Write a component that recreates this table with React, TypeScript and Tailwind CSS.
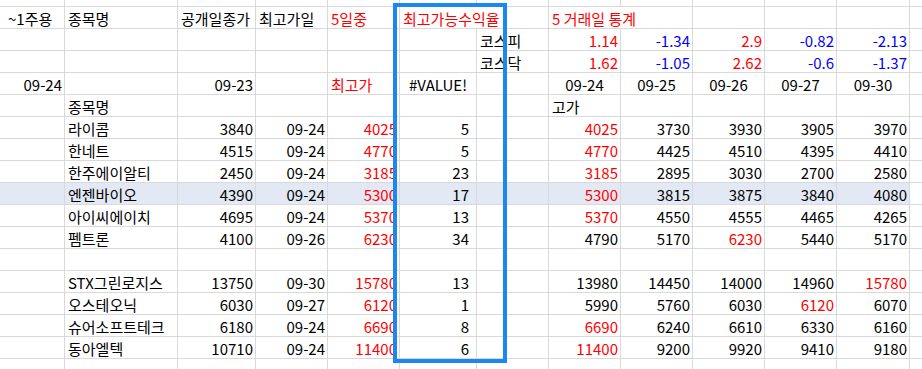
type Tone = 'k' | 'r' | 'b';
type Align = 'l' | 'r' | 'c';

interface CellDef {
  t?: string;
  tone?: Tone;
  align?: Align;
  open?: boolean; // text runs into the next cell, no divider
}

const COLS =
  'grid-cols-[65px_113px_78px_72px_72px_77px_72px_72px_72px_72px_72px_73px_12px]';

const r = (t: string): CellDef => ({ t, tone: 'r', align: 'r' });
const n = (t: string): CellDef => ({ t, align: 'r' });
const b = (t: string): CellDef => ({ t, tone: 'b', align: 'r' });
const c = (t: string): CellDef => ({ t, align: 'c' });
const E: CellDef = {};

const stock = (
  name: string,
  open: string,
  date: string,
  high: string,
  pct: string,
  days: CellDef[],
): CellDef[] => [E, { t: name }, n(open), n(date), r(high), { t: pct, align: 'r' }, E, ...days];

const ROWS: { cells: CellDef[]; hl?: boolean }[] = [
  {
    cells: [
      { t: '~1주용' },
      { t: '종목명' },
      { t: '공개일종가' },
      { t: '최고가일' },
      { t: '5일중', tone: 'r' },
      { t: '최고가능수익율', tone: 'r', open: true },
      E,
      { t: '5 거래일 통계', tone: 'r', open: true },
      E, E, E, E,
    ],
  },
  { cells: [E, E, E, E, E, E, { t: '코스피' }, r('1.14'), b('-1.34'), r('2.9'), b('-0.82'), b('-2.13')] },
  { cells: [E, E, E, E, E, E, { t: '코스닥' }, r('1.62'), b('-1.05'), r('2.62'), b('-0.6'), b('-1.37')] },
  {
    cells: [
      n('09-24'), E, n('09-23'), E,
      { t: '최고가', tone: 'r' },
      c('#VALUE!'),
      E,
      c('09-24'), c('09-25'), c('09-26'), c('09-27'), c('09-30'),
    ],
  },
  { cells: [E, { t: '종목명' }, E, E, E, E, E, { t: '고가' }, E, E, E, E] },
  { cells: stock('라이콤', '3840', '09-24', '4025', '5', [r('4025'), n('3730'), n('3930'), n('3905'), n('3970')]) },
  { cells: stock('한네트', '4515', '09-24', '4770', '5', [r('4770'), n('4425'), n('4510'), n('4395'), n('4410')]) },
  { cells: stock('한주에이알티', '2450', '09-24', '3185', '23', [r('3185'), n('2895'), n('3030'), n('2700'), n('2580')]) },
  { cells: stock('엔젠바이오', '4390', '09-24', '5300', '17', [r('5300'), n('3815'), n('3875'), n('3840'), n('4080')]), hl: true },
  { cells: stock('아이씨에이치', '4695', '09-24', '5370', '13', [r('5370'), n('4550'), n('4555'), n('4465'), n('4265')]) },
  { cells: stock('펨트론', '4100', '09-26', '6230', '34', [n('4790'), n('5170'), r('6230'), n('5440'), n('5170')]) },
  { cells: [E, E, E, E, E, E, E, E, E, E, E, E] },
  { cells: stock('STX그린로지스', '13750', '09-30', '15780', '13', [n('13980'), n('14450'), n('14000'), n('14960'), r('15780')]) },
  { cells: stock('오스테오닉', '6030', '09-27', '6120', '1', [n('5990'), n('5760'), n('6030'), r('6120'), n('6070')]) },
  { cells: stock('슈어소프트테크', '6180', '09-24', '6690', '8', [r('6690'), n('6240'), n('6610'), n('6330'), n('6160')]) },
  { cells: stock('동아엘텍', '10710', '09-24', '11400', '6', [r('11400'), n('9200'), n('9920'), n('9410'), n('9180')]) },
];

function Cell({ d, col, hl }: { d: CellDef; col: number; hl?: boolean }) {
  const tone = d.tone === 'r' ? 'text-[#ff0000]' : d.tone === 'b' ? 'text-[#0000ff]' : 'text-black';
  let pad = 'pl-[3px] justify-start';
  if (d.align === 'r') pad = col === 5 ? 'pr-[7px] justify-end' : 'pr-[2px] justify-end';
  if (d.align === 'c') pad = 'justify-center';
  if (col === 0 && d.align !== 'r') pad = 'pl-[8px] justify-start';
  return (
    <div
      className={`flex h-[22px] items-center border-b border-[#d9d9d9] pt-[1px] whitespace-nowrap ${
        d.open ? 'relative z-10 overflow-visible' : 'overflow-hidden border-r'
      } ${hl ? 'bg-[#e2e8f4]' : ''} ${pad} ${tone}`}
    >
      {d.t}
    </div>
  );
}

export default function App() {
  return (
    <div className="relative h-[369px] w-[922px] overflow-hidden bg-white font-['Noto_Sans_CJK_KR',sans-serif] text-[15px] leading-none">
      <div className={`grid ${COLS}`}>
        {Array.from({ length: 13 }).map((_, i) => (
          <div key={i} className={`h-[7px] border-b border-[#d9d9d9] ${i < 12 ? 'border-r' : ''}`} />
        ))}
        {ROWS.map((row, ri) => (
          <div key={ri} className="contents">
            {row.cells.map((d, ci) => (
              <Cell key={ci} d={d} col={ci} hl={row.hl} />
            ))}
            <div className="h-[22px] border-b border-[#d9d9d9]" />
          </div>
        ))}
        {Array.from({ length: 13 }).map((_, i) => (
          <div key={i} className={`h-[10px] ${i < 12 ? 'border-r border-[#d9d9d9]' : ''}`} />
        ))}
      </div>
      <div className="pointer-events-none absolute left-[393px] top-[3px] z-20 h-[360px] w-[114px] border-[4px] border-[#1b87f3]" />
    </div>
  );
}
